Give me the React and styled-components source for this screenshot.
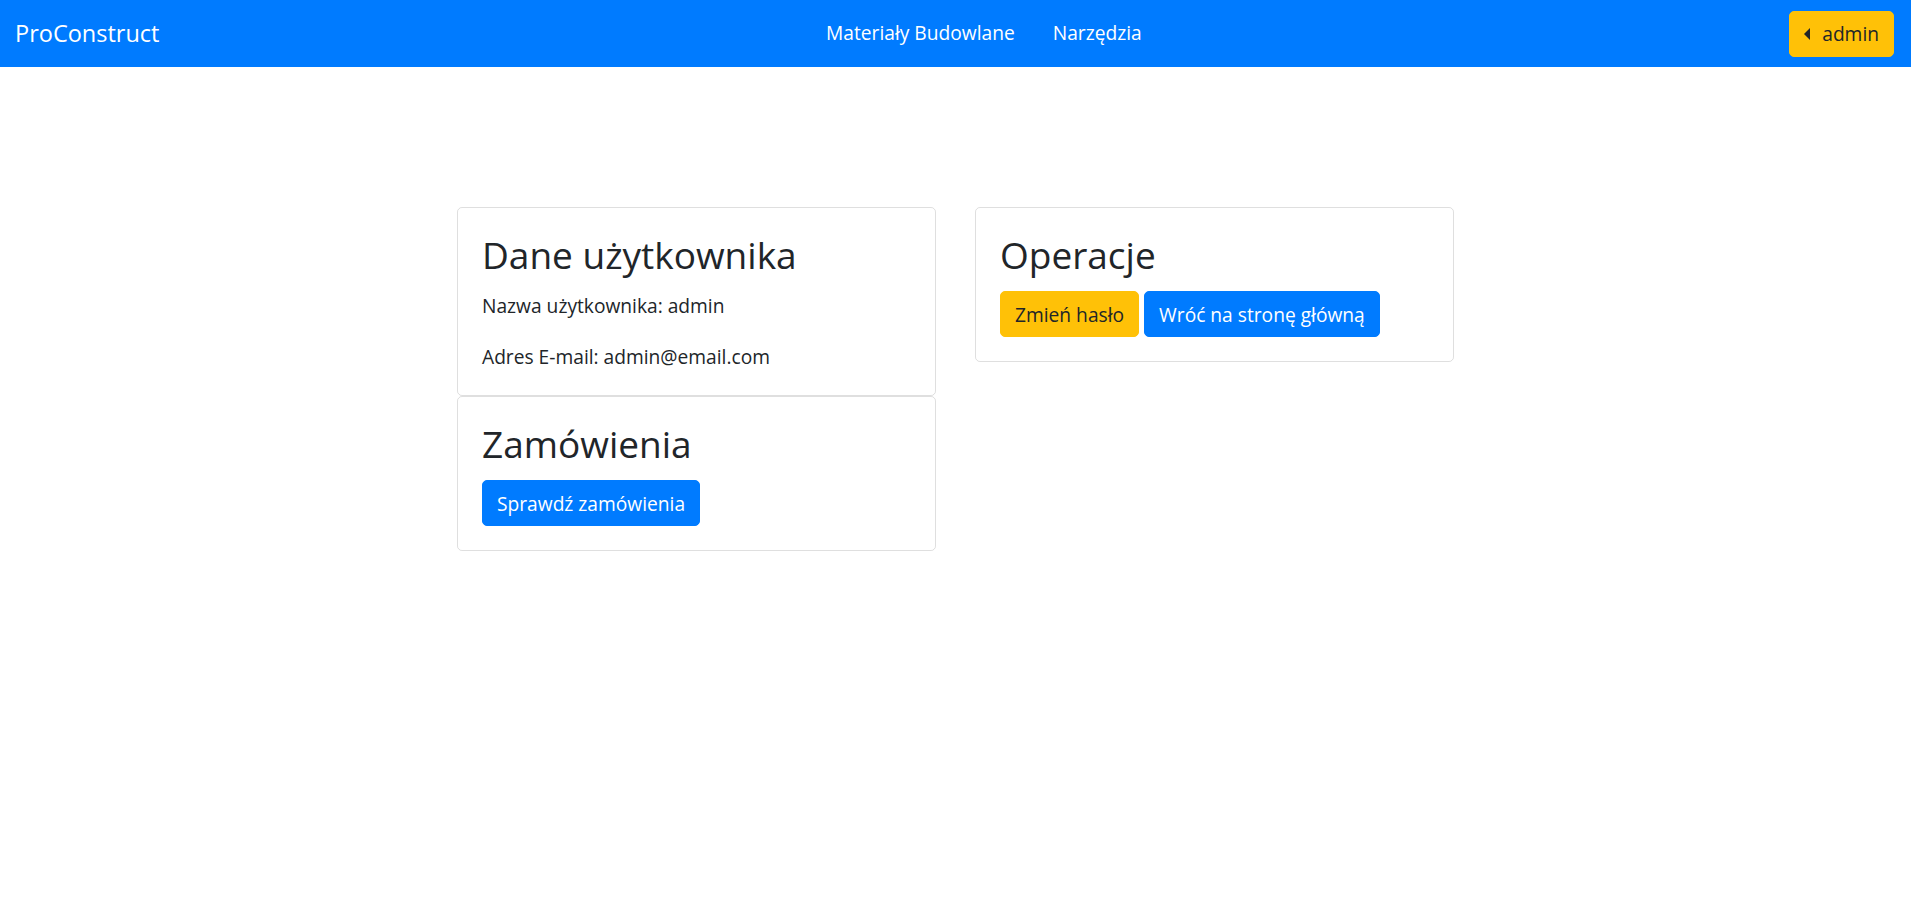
import React from 'react';
import styled, { createGlobalStyle } from 'styled-components';

const GlobalStyle = createGlobalStyle`
  html, body {
    margin: 0;
    padding: 0;
    background: #fff;
  }
  body {
    font-family: "Open Sans", "Noto Sans", sans-serif;
    font-size: 19.2px;
    color: #212529;
  }
`;

export default function App() {
  return (
    <>
      <GlobalStyle />
      <Navbar>
        <Brand>ProConstruct</Brand>
        <NavLinks>
          <NavLink>Materiały Budowlane</NavLink>
          <NavLink>Narzędzia</NavLink>
        </NavLinks>
        <Button $variant="warning">
          <Caret />
          admin
        </Button>
      </Navbar>

      <Main>
        <Column>
          <Card>
            <Title>Dane użytkownika</Title>
            <CardText>Nazwa użytkownika: admin</CardText>
            <CardText>Adres E-mail: admin@email.com</CardText>
          </Card>
          <Card>
            <Title>Zamówienia</Title>
            <Buttons>
              <Button>Sprawdź zamówienia</Button>
            </Buttons>
          </Card>
        </Column>
        <Column>
          <Card>
            <Title>Operacje</Title>
            <Buttons>
              <Button $variant="warning">Zmień hasło</Button>
              <Button>Wróć na stronę główną</Button>
            </Buttons>
          </Card>
        </Column>
      </Main>
    </>
  );
}

// Estilos
const Navbar = styled.nav`
  display: flex;
  align-items: center;
  height: 67px;
  padding: 0 17px 0 15px;
  background-color: #007bff;
`;

const Brand = styled.a`
  margin-right: 19px;
  font-size: 23.5px;
  color: #fff;
  line-height: 1.5;
`;

const NavLinks = styled.div`
  display: flex;
  margin: 0 auto;
`;

const NavLink = styled.a`
  padding: 0 19px;
  color: #fff;
  font-size: 19.2px;
  line-height: 1.5;
`;

const Button = styled.button`
  display: inline-flex;
  align-items: center;
  height: 46px;
  padding: 0 14px;
  border: 1px solid ${(p) => (p.$variant === 'warning' ? '#ffc107' : '#007bff')};
  border-radius: 5px;
  background-color: ${(p) => (p.$variant === 'warning' ? '#ffc107' : '#007bff')};
  color: ${(p) => (p.$variant === 'warning' ? '#212529' : '#fff')};
  font-family: inherit;
  font-size: 19.2px;
  cursor: pointer;
`;

const Caret = styled.span`
  width: 0;
  height: 0;
  margin-right: 12px;
  border-top: 6px solid transparent;
  border-bottom: 6px solid transparent;
  border-right: 6px solid #212529;
`;

const Main = styled.main`
  display: flex;
  justify-content: center;
  align-items: flex-start;
  gap: 39px;
  padding-top: 140px;
`;

const Column = styled.div`
  display: flex;
  flex-direction: column;
  width: 479px;
`;

const Card = styled.div`
  padding: 24px;
  border: 1px solid rgba(0, 0, 0, 0.125);
  border-radius: 5px;
`;

const Title = styled.h2`
  margin: 0 0 13px;
  font-size: 37px;
  font-weight: 400;
  line-height: 46px;
`;

const CardText = styled.p`
  margin: 0 0 22px;
  line-height: 29px;

  &:last-child {
    margin-bottom: 0;
  }
`;

const Buttons = styled.div`
  display: flex;
  gap: 5px;
`;
